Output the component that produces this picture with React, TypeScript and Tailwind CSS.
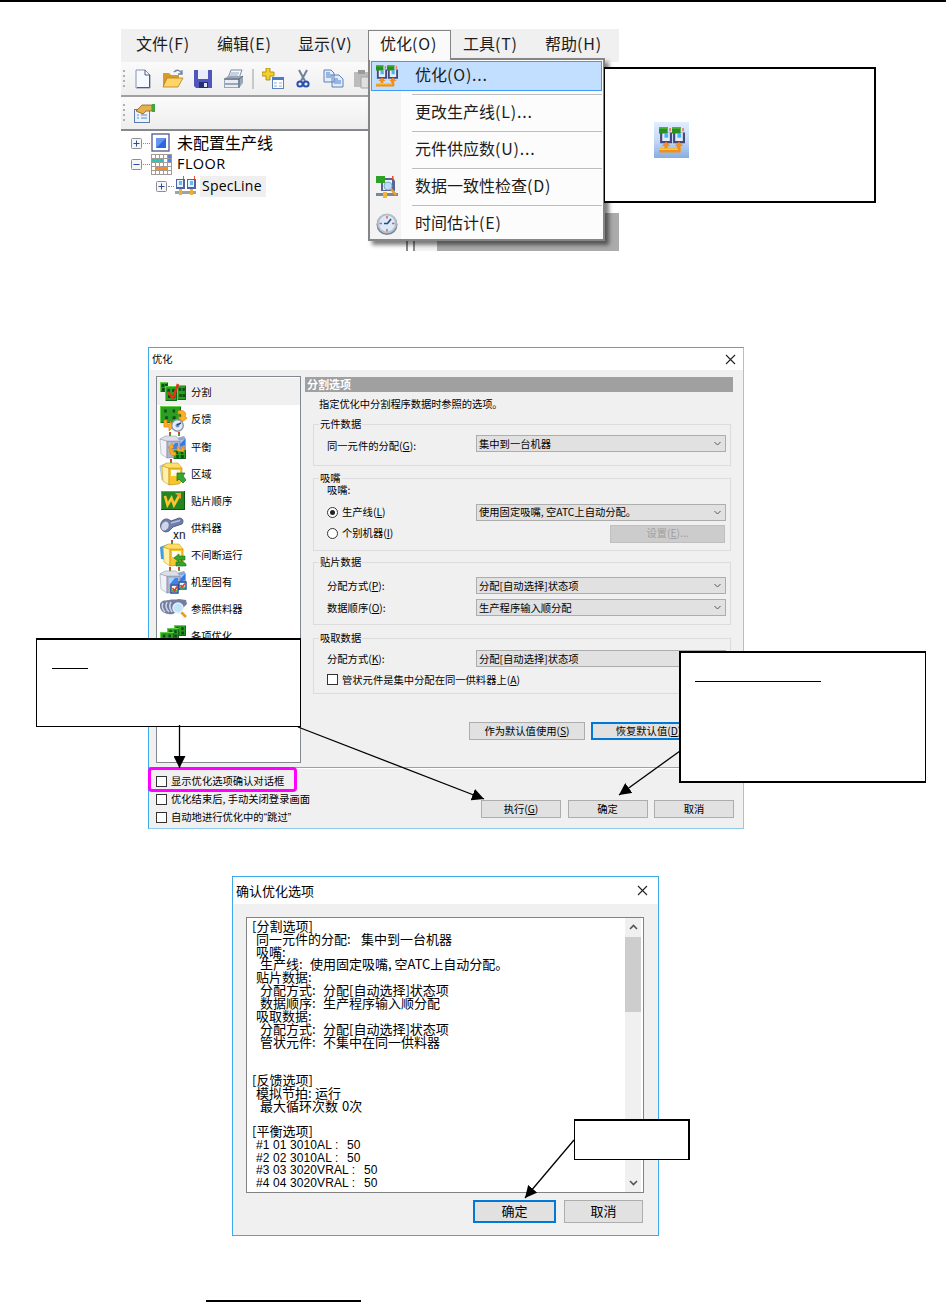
import type { ReactNode } from "react";
import clsx from "clsx";

// ---------------------------------------------------------------------------
// Data
// ---------------------------------------------------------------------------

interface SideItem {
  label: string;
  icon: ReactNode;
}

interface ReportLine {
  indent: string;
  label: string;
  labelWidth?: string;
  value?: string;
  narrow?: boolean;
}

const REPORT: ReportLine[] = [
  { indent: "pl-0", label: "[分割选项]" },
  { indent: "pl-1", label: "同一元件的分配:", labelWidth: "w-[105px]", value: "集中到一台机器" },
  { indent: "pl-1", label: "吸嘴:" },
  { indent: "pl-2", label: "生产线:", labelWidth: "w-[50px]", value: "使用固定吸嘴, 空ATC上自动分配。" },
  { indent: "pl-1", label: "贴片数据:" },
  { indent: "pl-2", label: "分配方式:", labelWidth: "w-[63px]", value: "分配[自动选择]状态项" },
  { indent: "pl-2", label: "数据顺序:", labelWidth: "w-[63px]", value: "生产程序输入顺分配" },
  { indent: "pl-1", label: "吸取数据:" },
  { indent: "pl-2", label: "分配方式:", labelWidth: "w-[63px]", value: "分配[自动选择]状态项" },
  { indent: "pl-2", label: "管状元件:", labelWidth: "w-[63px]", value: "不集中在同一供料器" },
  { indent: "pl-0", label: "" },
  { indent: "pl-0", label: "" },
  { indent: "pl-0", label: "[反馈选项]" },
  { indent: "pl-1", label: "模拟节拍:", labelWidth: "w-[59px]", value: "运行" },
  { indent: "pl-2", label: "最大循环次数", labelWidth: "w-[82px]", value: "0次" },
  { indent: "pl-0", label: "" },
  { indent: "pl-0", label: "[平衡选项]" },
  { indent: "pl-1", label: "#1 01 3010AL :", labelWidth: "w-[91px]", value: "50", narrow: true },
  { indent: "pl-1", label: "#2 02 3010AL :", labelWidth: "w-[91px]", value: "50", narrow: true },
  { indent: "pl-1", label: "#3 03 3020VRAL :", labelWidth: "w-[108px]", value: "50", narrow: true },
  { indent: "pl-1", label: "#4 04 3020VRAL :", labelWidth: "w-[108px]", value: "50", narrow: true },
];

// ---------------------------------------------------------------------------
// Icon parts
// ---------------------------------------------------------------------------

function Board({ x = 0, y = 0, w = 20, h = 16 }: { x?: number; y?: number; w?: number; h?: number }) {
  return (
    <g transform={`translate(${x} ${y})`}>
      <rect width={w} height={h} fill="#2c9f22" />
      <path d={`M0 ${h - 0.5}H${w - 0.5}V0`} fill="none" stroke="#11691a" />
      <path d={`M0 .5H${w}M.5 0V${h}`} fill="none" stroke="#62d048" />
      <path
        d={`M${w * 0.2} ${h * 0.2}h2.500v3h-2.500zM${w * 0.6} ${h * 0.2}h2.500v3h-2.500zM${w * 0.25} ${h * 0.6}h2.500v3h-2.500zM${w * 0.6} ${h * 0.6}h3v3h-3z`}
        fill="#0c4f14"
      />
    </g>
  );
}

/** Placement machine seen from the front left corner. */
function Cube({ x = 0, y = 0, yellow = false }: { x?: number; y?: number; yellow?: boolean }) {
  return (
    <g transform={`translate(${x} ${y})`}>
      <path d="M0 4 7 6V23L1 19Z" fill={yellow ? "#fff0a8" : "#f1f2f8"} stroke={yellow ? "#d39c17" : "#a0a4b7"} strokeWidth=".6" />
      <path d="M7 6H20V19L17 22 7 23Z" fill={yellow ? "#f8c62b" : "#aeb4ca"} stroke={yellow ? "#bd850e" : "#7d8196"} strokeWidth=".6" />
      <path d="M0 4 5 1H16L20 6H7Z" fill={yellow ? "#ffdf69" : "#dcdfe9"} stroke={yellow ? "#d39c17" : "#9a9eb1"} strokeWidth=".6" />
      <path d="M9 8H18V14H9Z" fill={yellow ? "#fdf3cb" : "#3c82ea"} />
      <path d="M9 8H15L10 14H9Z" fill={yellow ? "#ffffff" : "#a9d2ff"} />
    </g>
  );
}

function BlueSide() {
  return (
    <>
      <path d="M18 6 25 4 27 7V19L21 23 18 22Z" fill="#9ba4c2" />
      <path d="M20 8 26 7V13L20 15Z" fill="#3279e6" />
      <path d="M20 8 26 7 20 13Z" fill="#9ccbff" />
    </>
  );
}

function Lamp({ x, y }: { x: number; y: number }) {
  return (
    <g transform={`translate(${x} ${y})`}>
      <path d="M0 0H2V2H0Z" fill="#e03a2d" />
      <path d="M0 2H2V4H0Z" fill="#4b9b36" />
    </g>
  );
}

function SideSvg({ children }: { children: ReactNode }) {
  return (
    <svg width="28" height="28" viewBox="0 0 28 28" className="flex-shrink-0">
      {children}
    </svg>
  );
}

const SIDE_ITEMS: SideItem[] = [
  {
    label: "分割",
    icon: (
      <SideSvg>
        <Board x={1} y={4} w={8} h={10} />
        <Board x={6} y={8} w={12} h={15} />
        <Board x={18} y={7} w={9} h={15} />
        <path d="M9 14 14 20 19 6" fill="none" stroke="#ea2f1b" strokeWidth="2.400" />
      </SideSvg>
    ),
  },
  {
    label: "反馈",
    icon: (
      <SideSvg>
        <Board x={1} y={1} w={21} h={17} />
        <path d="M19 6C25 4 28 8 26 12L28 13 23 17 19 12H22C23 10 22 8 19 9ZM5 15V22H10V26L15 21 11 16V19H8V15Z" fill="#ffb024" stroke="#d97c10" strokeWidth=".7" />
        <circle cx="18.500" cy="20.500" r="6.500" fill="#8e99ab" />
        <circle cx="18.500" cy="20.500" r="5" fill="#e4edf8" />
        <circle cx="18.500" cy="20.500" r="2" fill="#7693ba" />
        <path d="M18 20 22 18" fill="none" stroke="#26497c" strokeWidth="1.400" />
      </SideSvg>
    ),
  },
  {
    label: "平衡",
    icon: (
      <SideSvg>
        <BlueSide />
        <Cube x={1} y={3} />
        <Lamp x={10} y={0} />
        <Lamp x={19} y={0} />
        <Board x={14} y={17} w={13} h={10} />
        <path d="M9 16 13 11 15 16H13C13 20 15 21 17 20V23C12 25 10 21 11 16ZM18 19V14L22 18 25 13 25 20Z" fill="#ffad27" stroke="#d8780c" strokeWidth=".6" />
      </SideSvg>
    ),
  },
  {
    label: "区域",
    icon: (
      <SideSvg>
        <path d="M1 7 8 4V20L3 21Z" fill="#c2ddf6" stroke="#8fa9c8" strokeWidth=".6" />
        <Cube x={3} y={3} yellow />
        <Lamp x={11} y={0} />
        <path d="M18 14H26L24 17 27 21 24 24 20 20 18 22Z" fill="#38a834" stroke="#12701b" strokeWidth=".7" />
      </SideSvg>
    ),
  },
  {
    label: "贴片顺序",
    icon: (
      <SideSvg>
        <rect x="2" y="5" width="24" height="19" fill="#23851f" />
        <path d="M2 23.500H25.500V5" fill="none" stroke="#0b5912" />
        <path d="M2 5.500H25M2.500 5V23" fill="none" stroke="#4eb43c" />
        <path d="M6 10 8.500 19 12.500 12 15 19 20 10" fill="none" stroke="#ffc42e" strokeWidth="2.600" />
        <path d="M16 7H22V13Z" fill="#ff9822" />
      </SideSvg>
    ),
  },
  {
    label: "供料器",
    icon: (
      <SideSvg>
        <path d="M2 10C4 5 9 5 12 8L20 5C24 5 25 8 23 11L14 14 10 18C5 21 0 16 2 10Z" fill="#6f7da9" stroke="#454e76" strokeWidth=".8" />
        <ellipse cx="6" cy="13" rx="3.500" ry="4.800" transform="rotate(25 6 13)" fill="#cfd6ea" />
        <path d="M12 10 21 7.500" stroke="#b6c1e0" strokeWidth="1.500" />
        <text x="14" y="25.500" fontSize="12" fontFamily="Roboto, sans-serif" fill="#222">xn</text>
      </SideSvg>
    ),
  },
  {
    label: "不间断运行",
    icon: (
      <SideSvg>
        <path d="M1 7 9 4V20L2 19Z" fill="#3c9de2" />
        <Cube x={4} y={3} yellow />
        <Lamp x={12} y={0} />
        <path d="M15 18 20 14V16H26V20H20V22ZM27 24 22 20V22H17V26H27Z" fill="#34a52a" stroke="#107016" strokeWidth=".6" />
      </SideSvg>
    ),
  },
  {
    label: "机型固有",
    icon: (
      <SideSvg>
        <BlueSide />
        <Cube x={1} y={3} />
        <Lamp x={10} y={0} />
        <Lamp x={19} y={0} />
        <path d="M12 18H19V26H12ZM20 15H27V22H20Z" fill="#f5f9ff" stroke="#1b4fa0" strokeWidth="1.400" />
        <path d="M13 23H18V25H13ZM21 19.500H26V21.500H21Z" fill="#4fba47" />
        <path d="M13.500 21 15.500 24 18 19.500M21.500 18 23 20 26 16.500" fill="none" stroke="#df3a22" strokeWidth="1.600" />
      </SideSvg>
    ),
  },
  {
    label: "参照供料器",
    icon: (
      <SideSvg>
        <path d="M1 10C3 5 8 7 10 6 13 5 16 6 20 5L27 6 28 10 24 14 14 20C7 21 0 18 1 10Z" fill="#747e9f" />
        <path d="M4 9C2 12 4 16 6 18M8 8C6 12 8 16 10 18M12 8C10 11 11 15 13 18" fill="none" stroke="#cdd3e5" strokeWidth="1.600" />
        <path d="M22 18 27 23" stroke="#eb9a2a" strokeWidth="2.600" />
        <circle cx="19" cy="14" r="5" fill="#bfe4fd" stroke="#e9f2fb" strokeWidth="1.400" />
      </SideSvg>
    ),
  },
  {
    label: "各项优化",
    icon: (
      <SideSvg>
        <Board x={15} y={4} w={12} h={11} />
        <Board x={8} y={7} w={12} h={11} />
        <Board x={1} y={11} w={14} h={12} />
      </SideSvg>
    ),
  },
];

/** Two placement machines with green boards on top and orange arrows below. */
function OptimizeIcon({ size }: { size: number }) {
  return (
    <svg width={size} height={size} viewBox="0 0 24 24">
      <path d="M1 5H12V15H1ZM13 5H24V15H13Z" fill="#46487c" />
      <path d="M3 5H10V13H3ZM15 5H22V13H15Z" fill="#e4eefa" />
      <path d="M5 6H8.500V10H5ZM17 6H20.500V10H17Z" fill="#4db4f5" />
      <path d="M0 0H8V6H0ZM12 0H20V6H12Z" fill="#27901f" />
      <path d="M0 0H8V1.500H0ZM12 0H20V1.500H12Z" fill="#4fb83c" />
      <path d="M9.500 1H11V4H9.500ZM21.500 1H23V4H21.500Z" fill="#ee7460" />
      <path d="M0 19.500H5V17.500H2.500L6.500 13.500 10.500 17.500H8V19.500H16.500V17.500H14.500L18.500 13.500 22.500 17.500H20V23.500H0Z" fill="#f68d18" />
      <path d="M0 20.500H17.500" fill="none" stroke="#ffcf26" strokeWidth="1.500" />
    </svg>
  );
}

function CheckDataIcon() {
  return (
    <svg width="22" height="22" viewBox="0 0 22 22">
      <path d="M5 2H17L19 5V15H5Z" fill="#5a6490" />
      <rect x="7" y="4" width="9" height="10" fill="#e5f2fd" />
      <path d="M0 0H9V7H0Z" fill="#2ba125" />
      <path d="M16 0H17.500V3H16Z" fill="#f04b35" />
      <path d="M0 17H22V20H0Z" fill="#7c8890" />
      <path d="M7 16H11V22H7Z" fill="#f0b83b" />
      <path d="M15 13 20 19" stroke="#ef9a2b" strokeWidth="2.500" />
      <circle cx="12" cy="10" r="4" fill="#b7e1fb" stroke="#8fa6c4" />
    </svg>
  );
}

function ClockIcon() {
  return (
    <svg width="22" height="22" viewBox="0 0 22 22">
      <circle cx="11" cy="11.500" r="10.500" fill="#76818f" />
      <circle cx="11" cy="10.500" r="10" fill="#b3bfce" />
      <circle cx="11" cy="10.500" r="8" fill="#d9e9fa" />
      <path d="M11 3V5.500M11 16V18.500M3.500 10.500H6M16 10.500H18.500" stroke="#e65a35" strokeWidth="1.500" />
      <path d="M15 6 11.500 10.500H8" fill="none" stroke="#294b7c" strokeWidth="1.600" />
    </svg>
  );
}

function LineIcon() {
  return (
    <svg width="21" height="20" viewBox="0 0 21 20">
      <path d="M1 3H10V13H1ZM12 3H21V13H12Z" fill="#5361a2" />
      <path d="M2 4H8V11H2ZM13 4H19V11H13Z" fill="#e3f2fd" />
      <path d="M4 5H7V9H4ZM15 5H18V9H15Z" fill="#66b8f2" />
      <path d="M8 0H9V3H8ZM19 0H20V3H19Z" fill="#f04a32" />
      <path d="M0 15H21V18H0Z" fill="#9aa4ae" />
      <path d="M4 13H7V19H4ZM15 13H18V19H15Z" fill="#eab03c" />
    </svg>
  );
}

// ---------------------------------------------------------------------------
// Editor window with the open menu
// ---------------------------------------------------------------------------

function ToolCell({ children }: { children: ReactNode }) {
  return <span className="flex w-[30px] flex-shrink-0 items-center justify-center">{children}</span>;
}

function Grip() {
  return (
    <svg width="7" height="22" viewBox="0 0 7 22" className="flex-shrink-0">
      <path d="M2 2h2v2H2zM2 7h2v2H2zM2 12h2v2H2zM2 17h2v2H2z" fill="#b0b0b0" />
    </svg>
  );
}

function Toolbar() {
  return (
    <div className="flex h-[33px] items-center bg-linear-to-b from-[#fafafa] to-[#eeeeee]">
      <Grip />
      <ToolCell>
        <svg width="16" height="20" viewBox="0 0 16 20">
          <path d="M1 1H10L15 6V19H1Z" fill="#f7faff" stroke="#8492b0" />
          <path d="M10 1V6H15M14.500 6V18.500H2" fill="none" stroke="#4a5c86" />
        </svg>
      </ToolCell>
      <ToolCell>
        <svg width="22" height="20" viewBox="0 0 22 20">
          <path d="M1 4H7L9 6H17V17H1Z" fill="#d99a2c" />
          <path d="M5 9H21L16 18H1Z" fill="#ffd56a" stroke="#b67d1c" strokeWidth=".8" />
          <path d="M12 3C15 0 18 1 20 5M20 1V5H16" fill="none" stroke="#6b84a8" strokeWidth="1.300" />
        </svg>
      </ToolCell>
      <ToolCell>
        <svg width="20" height="20" viewBox="0 0 20 20">
          <path d="M1 1H19V19H3L1 17Z" fill="#5056bd" />
          <path d="M5 1H15V10H5Z" fill="#e9edfb" />
          <path d="M6 13H15V19H6Z" fill="#27306f" />
          <path d="M11 14H14V18H11Z" fill="#dde4f7" />
        </svg>
      </ToolCell>
      <ToolCell>
        <svg width="21" height="20" viewBox="0 0 21 20">
          <path d="M8 1H19L16 9H5Z" fill="#f6f9fd" stroke="#7d8a9d" />
          <path d="M8 4H16M7 6H15" stroke="#98a9bd" />
          <path d="M1 10 5 7H20V14L16 19H1Z" fill="#9aa7b8" />
          <path d="M2 11H15V14H2ZM2 16H15V18H2Z" fill="#e8edf3" />
          <path d="M1 10H16V19M16 10 20 7" fill="none" stroke="#58667b" />
        </svg>
      </ToolCell>
      <span className="mx-[4px] h-5 w-[2px] flex-shrink-0 bg-[#c8c8c8]" />
      <ToolCell>
        <svg width="22" height="21" viewBox="0 0 22 21">
          <path d="M4 0H8V4H12V8H8V12H4V8H0V4H4Z" fill="#f5cf24" stroke="#a48309" strokeWidth=".8" />
          <rect x="10.500" y="9.500" width="11" height="11" fill="#fff" stroke="#5c82ba" />
          <path d="M10 9H22V12H10Z" fill="#487ccb" />
          <path d="M12 15H15M17 15H20M12 18H15M17 18H20" stroke="#8dafd9" />
        </svg>
      </ToolCell>
      <ToolCell>
        <svg width="14" height="20" viewBox="0 0 14 20">
          <path d="M3 1 9 12M11 1 5 12" stroke="#6f819b" strokeWidth="2" />
          <circle cx="4" cy="15" r="2.600" fill="none" stroke="#2851ae" strokeWidth="2" />
          <circle cx="10" cy="15" r="2.600" fill="none" stroke="#2851ae" strokeWidth="2" />
        </svg>
      </ToolCell>
      <ToolCell>
        <svg width="21" height="19" viewBox="0 0 21 19">
          <path d="M1 1H8L11 4V13H1ZM9 6H16L20 10V18H9Z" fill="#e2edfc" stroke="#5d80b5" />
          <path d="M3 4H7M3 6H9M3 8H8M11 10H15M11 12H18M11 14H18" stroke="#4c7fca" />
        </svg>
      </ToolCell>
      <ToolCell>
        <svg width="21" height="20" viewBox="0 0 21 20">
          <path d="M1 3H16V18H1Z" fill="#bcbcbc" />
          <path d="M5 1H12V5H5Z" fill="#9b9b9b" />
          <path d="M8 8H20V19H8Z" fill="#e0e0e0" stroke="#a5a5a5" />
        </svg>
      </ToolCell>
    </div>
  );
}

function Expander({ minus = false }: { minus?: boolean }) {
  return (
    <svg width="11" height="11" viewBox="0 0 11 11" className="flex-shrink-0">
      <rect x=".5" y=".5" width="10" height="10" rx="1" fill="#f6f6f6" stroke="#8e8e8e" />
      <path d="M2.500 5.500H8.500" stroke="#2b4ba0" />
      {!minus && <path d="M5.500 2.500V8.500" stroke="#2b4ba0" />}
    </svg>
  );
}

function Tree() {
  return (
    <div className="flex flex-col pt-[1px] text-[16px] leading-none text-black">
      <div className="flex h-[22px] items-center pl-[10px]">
        <Expander />
        <span className="mx-[1px] w-[7px] border-t border-dotted border-[#888]" />
        <svg width="20" height="20" viewBox="0 0 20 20">
          <rect x="1" y="1" width="17" height="17" fill="#fff" stroke="#51578d" strokeWidth="1.300" />
          <rect x="5" y="5" width="10" height="10" fill="#2e68df" />
          <path d="M5 5H15L5 15Z" fill="#6396f3" />
        </svg>
        <span className="ml-[6px] pb-[2px]">未配置生产线</span>
      </div>
      <div className="flex h-[21px] items-center pl-[10px]">
        <Expander minus />
        <span className="mx-[1px] w-[7px] border-t border-dotted border-[#888]" />
        <svg width="21" height="21" viewBox="0 0 21 21">
          <rect width="21" height="21" fill="#a19a95" />
          <path d="M1 1h3v3H1zM5 1h3v3H5zM9 1h3v3H9zM13 1h3v3h-3zM1 9h3v3H1zM5 9h3v3H5zM9 9h3v3H9zM13 9h3v3h-3zM1 13h3v3H1zM1 17h3v3H1zM5 17h3v3H5zM9 17h3v3H9zM13 17h3v3h-3zM17 9h3v3h-3zM17 13h3v3h-3zM17 17h3v3h-3z" fill="#fff" />
          <path d="M1 5h3v3H1zM5 5h3v3H5zM9 5h3v3H9z" fill="#2cc4b6" />
          <path d="M5 13h3v3H5zM9 13h3v3H9zM13 13h3v3h-3z" fill="#f78b2b" />
          <path d="M17 1h3v3h-3zM17 5h3v3h-3z" fill="#5085ed" />
          <path d="M13 5h3v3h-3z" fill="#fff" />
        </svg>
        <span className="ml-[5px] pb-[1px] font-['Open_Sans','Noto_Sans_CJK_SC',sans-serif] text-[14.500px] tracking-[0.400px]">
          FLOOR
        </span>
      </div>
      <div className="flex h-[22px] items-center pl-[35px]">
        <Expander />
        <span className="mx-[1px] w-[6px] border-t border-dotted border-[#888]" />
        <LineIcon />
        <span className="ml-[4px] flex h-[21px] w-[66px] items-center bg-[#efefef] pb-[1px] pl-[2px] font-['Open_Sans','Noto_Sans_CJK_SC',sans-serif] text-[14px] tracking-[0.200px]">
          SpecLine
        </span>
      </div>
    </div>
  );
}

/** Menu caption: the access key part is set a little wider. */
function Caption({ text, tail }: { text: string; tail: string }) {
  return (
    <span className="pb-[5px]">
      {text}
      <span className="tracking-[0.800px]">{tail}</span>
    </span>
  );
}

interface MenuRowProps {
  text: string;
  tail: string;
  icon?: ReactNode;
  active?: boolean;
}

function MenuRow({ text, tail, icon, active = false }: MenuRowProps) {
  return (
    <div
      className={clsx(
        "flex h-[30px] items-center border",
        active ? "border-[#3f9cf5] bg-[#c3dfff]" : "border-transparent",
      )}
    >
      <span className="mr-[13px] flex w-[30px] items-center justify-center">{icon}</span>
      <Caption text={text} tail={tail} />
    </div>
  );
}

function MenuLine() {
  return <div className="my-[3px] ml-[41px] h-px bg-[#bdbdbd]" />;
}

function EditorFigure() {
  return (
    <section className="relative ml-[121px] h-[222px] w-[498px] text-[16px] text-[#1c1c1c]">
      <div className="h-full w-full overflow-hidden">
        <nav className="flex h-[33px] items-center bg-[#f0f0f0] whitespace-nowrap">
          <span className="flex w-[81px] pl-[15px]">
            <Caption text="文件" tail="(F)" />
          </span>
          <span className="flex w-[81px] pl-[15px]">
            <Caption text="编辑" tail="(E)" />
          </span>
          <span className="flex w-[180px] pl-[15px]">
            <Caption text="显示" tail="(V)" />
          </span>
          <span className="flex w-[82px]">
            <Caption text="工具" tail="(T)" />
          </span>
          <Caption text="帮助" tail="(H)" />
        </nav>
        <div className="w-[300px] overflow-hidden">
          <Toolbar />
          <div className="flex h-[36px] items-center border-y-2 border-t-[#a0a0a0] border-b-[#85898f] bg-linear-to-b from-[#fbfbfb] to-[#eeeeee]">
            <Grip />
            <svg width="22" height="20" viewBox="0 0 22 20" className="ml-[6px]">
              <rect x=".5" y="6.500" width="15" height="13" fill="#eaf2fc" stroke="#5b7dae" />
              <path d="M3 12H5M7 12H13M3 15H5M7 15H13" stroke="#5b8dd2" />
              <path d="M2 8 8 2H18V8L12 8 9 11Z" fill="#e4b050" stroke="#8a6015" strokeWidth=".8" />
              <path d="M18 1H21V9H18Z" fill="#43a73e" />
            </svg>
          </div>
          <Tree />
        </div>
      </div>

      {/* Work area showing under the menu */}
      <div className="absolute right-0 bottom-0 flex h-[38px] w-[213px]">
        <span className="w-[9px] border-r-2 border-l-2 border-[#8b8b8b] bg-white" />
        <span className="w-[22px] bg-[#f3f3f3]" />
        <span className="flex-1 bg-[#ababab]" />
      </div>

      {/* Drop-down */}
      <div className="absolute top-[29px] left-[247px] h-[183px] w-[237px] border-2 border-[#858585] bg-[#fcfcfc] shadow-[4px_4px_4px_rgba(0,0,0,0.5)]">
        <div className="h-full bg-linear-to-r from-[#f3f3f3] from-[31px] to-[#fcfcfc] to-[31px] px-[1px] pt-[1px] whitespace-nowrap">
          <MenuRow text="优化" tail="(O)..." icon={<OptimizeIcon size={22} />} active />
          <MenuLine />
          <MenuRow text="更改生产线" tail="(L)..." />
          <MenuLine />
          <MenuRow text="元件供应数" tail="(U)..." />
          <MenuLine />
          <MenuRow text="数据一致性检查" tail="(D)" icon={<CheckDataIcon />} />
          <MenuLine />
          <MenuRow text="时间估计" tail="(E)" icon={<ClockIcon />} />
        </div>
      </div>
      <div className="absolute top-[1px] left-[247px] flex h-[30px] w-[83px] items-center border border-b-0 border-[#858585] bg-[#fafafa] pl-[11px]">
        <Caption text="优化" tail="(O)" />
      </div>
    </section>
  );
}

// ---------------------------------------------------------------------------
// Dialog controls
// ---------------------------------------------------------------------------

function CloseIcon() {
  return (
    <svg width="11" height="11" viewBox="0 0 11 11">
      <path d="M1 1 10 10M10 1 1 10" stroke="#222" strokeWidth="1.100" />
    </svg>
  );
}

function Key({ text, hotkey, colon = false }: { text: string; hotkey: string; colon?: boolean }) {
  return (
    <span>
      {text}(<span className="underline underline-offset-1">{hotkey}</span>){colon && ":"}
    </span>
  );
}

function Select({ value }: { value: string }) {
  return (
    <div className="flex h-[17px] w-[250px] items-center justify-between border border-[#adadad] bg-[#e1e1e1] pr-1 pl-[2px]">
      <span>{value}</span>
      <svg width="7" height="5" viewBox="0 0 7 5">
        <path d="M.5 1 3.500 4 6.500 1" fill="none" stroke="#555" />
      </svg>
    </div>
  );
}

interface ButtonProps {
  children: ReactNode;
  className: string;
  variant?: "normal" | "primary" | "disabled";
}

function Button({ children, className, variant = "normal" }: ButtonProps) {
  return (
    <button
      className={clsx(
        "flex flex-shrink-0 items-center justify-center",
        variant === "normal" && "border border-[#adadad] bg-[#e1e1e1]",
        variant === "primary" && "border-2 border-[#0078d7] bg-[#e1e1e1]",
        variant === "disabled" && "border border-[#bfbfbf] bg-[#cccccc] text-[#a0a0a0]",
        className,
      )}
    >
      {children}
    </button>
  );
}

function CheckBox({ children }: { children: ReactNode }) {
  return (
    <label className="flex items-center gap-[4px]">
      <span className="h-[11px] w-[11px] border border-[#333] bg-white" />
      <span>{children}</span>
    </label>
  );
}

function Radio({ checked = false, children }: { checked?: boolean; children: ReactNode }) {
  return (
    <label className="flex items-center gap-[4px]">
      <span className="flex h-[11px] w-[11px] items-center justify-center rounded-full border border-[#333] bg-white">
        {checked && <span className="h-[5px] w-[5px] rounded-full bg-[#222]" />}
      </span>
      <span>{children}</span>
    </label>
  );
}

function Group({ title, className, children }: { title: string; className: string; children: ReactNode }) {
  return (
    <div className={clsx("relative w-[418px] border border-[#dcdcdc]", className)}>
      <span className="absolute -top-[8px] left-[5px] bg-[#f0f0f0] px-[1px] leading-[14px]">{title}</span>
      {children}
    </div>
  );
}

// ---------------------------------------------------------------------------
// Options dialog
// ---------------------------------------------------------------------------

function OptionsDialog() {
  return (
    <section className="ml-[148px] flex h-[482px] w-[596px] flex-col border border-t-[#3fa9ee] border-r-[#8ecaec] border-b-[#8ecaec] border-l-[#3fa9ee] bg-[#f0f0f0] text-[10.300px] leading-none whitespace-nowrap text-black">
      <header className="flex h-[22px] flex-shrink-0 items-center justify-between bg-white pr-[7px] pl-[3px]">
        <span>优化</span>
        <CloseIcon />
      </header>

      <div className="flex h-[397px] flex-shrink-0">
        {/* Category list */}
        <div className="mt-[6px] ml-[7px] h-[387px] w-[145px] flex-shrink-0 border border-[#828790] bg-white pt-[1px]">
          {SIDE_ITEMS.map((item, i) => (
            <div
              key={item.label}
              className={clsx("flex h-[27.100px] items-center gap-[4px] pl-[2px]", i === 0 && "bg-[#f0f0f0]")}
            >
              {item.icon}
              <span className="pt-[2px]">{item.label}</span>
            </div>
          ))}
        </div>

        {/* Settings of the selected category */}
        <div className="flex w-[430px] flex-col pt-[7px] pl-[4px]">
          <div className="flex h-[15px] w-[428px] flex-shrink-0 items-center bg-[#a0a0a0] pl-[2px] text-[11px] font-bold text-white">
            分割选项
          </div>
          <div className="mt-[7px] ml-[14px] tracking-[-0.100px]">指定优化中分割程序数据时参照的选项。</div>

          <div className="mt-[15px] ml-[8px] flex flex-col">
            <Group title="元件数据" className="h-[42px]">
              <div className="flex items-center pt-[10px] pl-[13px]">
                <span className="w-[149px] pt-[5px]">
                  <Key text="同一元件的分配" hotkey="G" colon />
                </span>
                <Select value="集中到一台机器" />
              </div>
            </Group>

            <Group title="吸嘴" className="mt-[12px] h-[73px]">
              <div className="flex flex-col pl-[13px]">
                <span className="mt-[6px]">吸嘴:</span>
                <div className="mt-[8px] flex h-[17px] items-center">
                  <div className="w-[149px]">
                    <Radio checked>
                      <Key text="生产线" hotkey="L" />
                    </Radio>
                  </div>
                  <Select value="使用固定吸嘴, 空ATC上自动分配。" />
                </div>
                <div className="mt-[4px] flex h-[18px] items-center">
                  <div className="w-[283px]">
                    <Radio>
                      <Key text="个别机器" hotkey="I" />
                    </Radio>
                  </div>
                  <Button className="h-[18px] w-[115px]" variant="disabled">
                    <Key text="设置" hotkey="E" />...
                  </Button>
                </div>
              </div>
            </Group>

            <Group title="贴片数据" className="mt-[11px] h-[63px]">
              <div className="flex flex-col gap-[5px] pt-[14px] pl-[13px]">
                <div className="flex items-center">
                  <span className="w-[149px]">
                    <Key text="分配方式" hotkey="P" colon />
                  </span>
                  <Select value="分配[自动选择]状态项" />
                </div>
                <div className="flex items-center">
                  <span className="w-[149px]">
                    <Key text="数据顺序" hotkey="O" colon />
                  </span>
                  <Select value="生产程序输入顺分配" />
                </div>
              </div>
            </Group>

            <Group title="吸取数据" className="mt-[13px] h-[56px]">
              <div className="flex flex-col pt-[11px] pl-[13px]">
                <div className="flex items-center">
                  <span className="w-[149px]">
                    <Key text="分配方式" hotkey="K" colon />
                  </span>
                  <Select value="分配[自动选择]状态项" />
                </div>
                <div className="mt-[7px]">
                  <CheckBox>
                    <Key text="管状元件是集中分配在同一供料器上" hotkey="A" />
                  </CheckBox>
                </div>
              </div>
            </Group>
          </div>

          <div className="mt-[28px] ml-[164px] flex gap-[6px]">
            <Button className="h-[18px] w-[116px]">
              <Key text="作为默认值使用" hotkey="S" />
            </Button>
            <Button className="h-[18px] w-[115px]" variant="primary">
              <Key text="恢复默认值" hotkey="D" />
            </Button>
          </div>
        </div>
      </div>

      <footer className="flex flex-1 justify-between border-t border-[#a0a0a0] pr-[9px] pl-[7px] shadow-[inset_0_1px_0_#fff]">
        <div className="flex flex-col gap-[7px] pt-[8px]">
          <CheckBox>显示优化选项确认对话框</CheckBox>
          <CheckBox>优化结束后, 手动关闭登录画面</CheckBox>
          <CheckBox>
            自动地进行优化中的
            <span className="font-['Liberation_Sans','Noto_Sans_CJK_SC',sans-serif]">“跳过”</span>
          </CheckBox>
        </div>
        <div className="flex gap-[6.500px] pt-[32px]">
          <Button className="h-[18px] w-[80px]">
            <Key text="执行" hotkey="G" />
          </Button>
          <Button className="h-[18px] w-[80px]">确定</Button>
          <Button className="h-[18px] w-[80px]">取消</Button>
        </div>
      </footer>
    </section>
  );
}

// ---------------------------------------------------------------------------
// Confirmation dialog
// ---------------------------------------------------------------------------

function ConfirmDialog() {
  return (
    <section className="ml-[232px] flex h-[360px] w-[427px] flex-col border border-[#3fa9ee] bg-[#f0f0f0] text-[13px] leading-none whitespace-nowrap text-black">
      <header className="flex h-[27px] flex-shrink-0 items-center justify-between bg-white pr-[10px] pb-[1px] pl-[3px]">
        <span>确认优化选项</span>
        <CloseIcon />
      </header>

      <div className="mt-[13px] ml-[13px] flex h-[276px] w-[398px] flex-shrink-0 justify-between border border-[#828282] bg-white pr-[2px]">
        <div className="pt-[1px] pl-[5px]">
          {REPORT.map((line, i) => (
            <div
              key={i}
              className={clsx(
                "flex h-[12.850px] items-center",
                line.indent,
                line.narrow && "pt-[2px] font-['Liberation_Sans',sans-serif] text-[12px]",
              )}
            >
              <span className={clsx(line.labelWidth, line.narrow && "tracking-[0.100px]")}>{line.label}</span>
              <span>{line.value}</span>
            </div>
          ))}
        </div>
        <div className="flex w-[16px] flex-col items-center justify-between bg-[#f0f0f0] py-[6px]">
          <svg width="9" height="6" viewBox="0 0 9 6">
            <path d="M1 5 4.500 1.500 8 5" fill="none" stroke="#555" strokeWidth="1.600" />
          </svg>
          <div className="mt-[7px] mb-auto h-[75px] w-full flex-shrink-0 bg-[#cdcdcd]" />
          <svg width="9" height="6" viewBox="0 0 9 6">
            <path d="M1 1 4.500 4.500 8 1" fill="none" stroke="#555" strokeWidth="1.600" />
          </svg>
        </div>
      </div>

      <div className="mt-[7px] ml-[240px] flex gap-[8px]">
        <Button className="h-[23px] w-[83px] pb-[2px]" variant="primary">
          确定
        </Button>
        <Button className="h-[23px] w-[79px] pb-[2px]">取消</Button>
      </div>
    </section>
  );
}

// ---------------------------------------------------------------------------
// Page
// ---------------------------------------------------------------------------

/** Call-out boxes and pointers that lie over the figures. */
function Annotations() {
  return (
    <>
      <div className="absolute top-[67px] left-[604px] h-[136px] w-[272px] border-2 border-l border-black bg-white">
        <div className="mt-[53px] ml-[49px] flex h-[36px] w-[35px] items-center justify-center bg-linear-to-b from-[#e0edff] via-[#c5daf7] to-[#86ade3]">
          <OptimizeIcon size={26} />
        </div>
      </div>
      <div className="absolute top-[638px] left-[36px] h-[89px] w-[265px] border border-t-2 border-black bg-white">
        <div className="mt-[28px] ml-[15px] h-px w-[36px] bg-black" />
      </div>
      <div className="absolute top-[651px] left-[679px] h-[132px] w-[247px] border-2 border-r border-black bg-white">
        <div className="mt-[28px] ml-[14px] h-px w-[126px] bg-black" />
      </div>
      <div className="absolute top-[1119px] left-[574px] h-[41px] w-[116px] border-2 border-b border-l border-black bg-white" />
      <div className="absolute top-[767px] left-[148px] h-[25px] w-[149px] rounded-[4px] border-3 border-[#ff00ff]" />
      <svg width="946" height="1302" viewBox="0 0 946 1302" className="pointer-events-none absolute top-0 left-0">
        <defs>
          <marker id="tip" markerUnits="userSpaceOnUse" markerWidth="12" markerHeight="12" refX="12" refY="6" orient="auto">
            <path d="M0 0 12 6 0 12Z" fill="#000" />
          </marker>
        </defs>
        <g stroke="#000" strokeWidth="1.300">
          <line x1="179.500" y1="725" x2="179.500" y2="768" markerEnd="url(#tip)" />
          <line x1="298" y1="727" x2="484" y2="799" markerEnd="url(#tip)" />
          <line x1="680" y1="751" x2="619" y2="795" markerEnd="url(#tip)" />
          <line x1="574" y1="1140" x2="525" y2="1198" markerEnd="url(#tip)" />
        </g>
      </svg>
    </>
  );
}

export default function App() {
  return (
    <main className="relative flex h-[1302px] w-[946px] flex-col overflow-hidden bg-white font-['Noto_Sans_CJK_SC',sans-serif]">
      <div className="mb-[27px] h-[2px] flex-shrink-0 bg-black" />
      <EditorFigure />
      <div className="h-[96px] flex-shrink-0" />
      <OptionsDialog />
      <div className="h-[47px] flex-shrink-0" />
      <ConfirmDialog />
      <div className="mt-auto ml-[206px] h-[2px] w-[155px] flex-shrink-0 bg-black" />
      <Annotations />
    </main>
  );
}
